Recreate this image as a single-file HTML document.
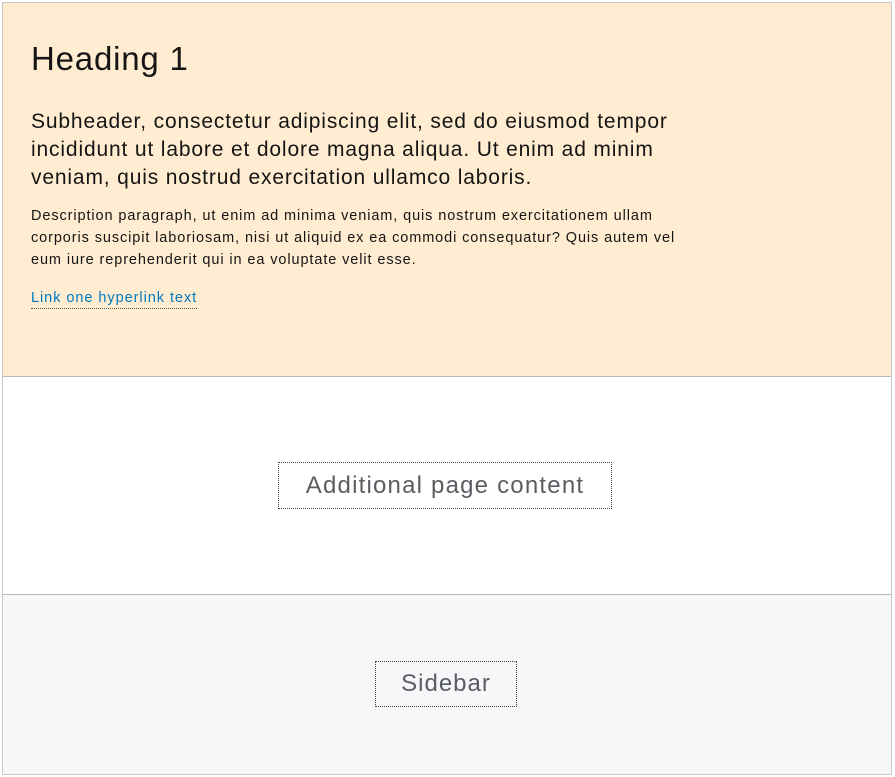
<!DOCTYPE html>
<html><head><style>
*{margin:0;padding:0;box-sizing:border-box}
body{width:895px;height:777px;background:#fff;font-family:"Liberation Sans",sans-serif;position:relative;overflow:hidden}
.frame{position:absolute;left:2px;top:2px;width:890px;height:773px;border:1px solid #c8c8c8}
.hero{position:absolute;left:3px;top:3px;width:888px;height:374px;background:#ffecd1;border-bottom:1px solid #b8b8b8}
.main{position:absolute;left:3px;top:377px;width:888px;height:218px;background:#fff;border-bottom:1px solid #b8b8b8}
.side{position:absolute;left:3px;top:595px;width:888px;height:179px;background:#f6f7f9}
h1{position:absolute;left:31px;top:40px;font-size:33px;font-weight:normal;color:#151515;letter-spacing:0.8px;white-space:nowrap}
.sub{position:absolute;left:31px;top:108px;font-size:21px;line-height:28px;color:#151515;letter-spacing:0.85px;white-space:nowrap}
.desc{position:absolute;left:31px;top:205px;font-size:14.5px;line-height:22px;color:#151515;letter-spacing:0.9px;white-space:nowrap}
.link{position:absolute;left:31px;top:288px;font-size:14.5px;line-height:20px;color:#0079c1;border-bottom:1px dotted #555;white-space:nowrap;letter-spacing:0.95px}
.box{position:absolute;border:1px dotted #444;color:#5a5d62;font-size:24px;text-align:center;white-space:nowrap;letter-spacing:1.2px}
</style></head><body>
<div class="frame"></div>
<div class="hero"></div>
<div class="main"></div>
<div class="side"></div>
<h1>Heading 1</h1>
<div class="sub">Subheader, consectetur adipiscing elit, sed do eiusmod tempor<br>incididunt ut labore et dolore magna aliqua. Ut enim ad minim<br>veniam, quis nostrud exercitation ullamco laboris.</div>
<div class="desc">Description paragraph, ut enim ad minima veniam, quis nostrum exercitationem ullam<br>corporis suscipit laboriosam, nisi ut aliquid ex ea commodi consequatur? Quis autem vel<br>eum iure reprehenderit qui in ea voluptate velit esse.</div>
<div class="link">Link one hyperlink text</div>
<div class="box" style="left:278px;top:462px;width:334px;height:47px;line-height:45px">Additional page content</div>
<div class="box" style="left:375px;top:661px;width:142px;height:46px;line-height:44px;letter-spacing:1px">Sidebar</div>
</body></html>
